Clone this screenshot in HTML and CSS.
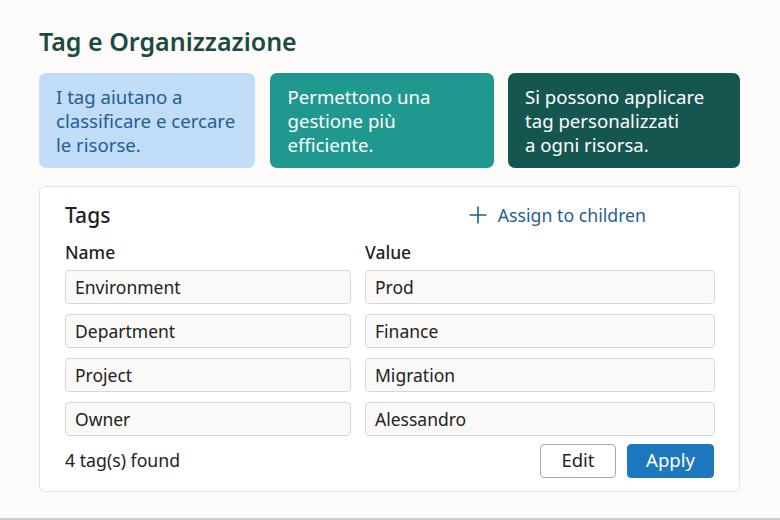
FILE: index.html
```html
<!DOCTYPE html>
<html lang="it">
<head>
<meta charset="utf-8">
<title>Tag e Organizzazione</title>
<link rel="stylesheet" href="styles.css">
</head>
<body>
<div class="page">
  <h1 class="title">Tag e Organizzazione</h1>
  <div class="cards">
    <div class="card card-light">I tag aiutano a<br>classificare e cercare<br>le risorse.</div>
    <div class="card card-teal">Permettono una<br>gestione più<br>efficiente.</div>
    <div class="card card-dark">Si possono applicare<br>tag personalizzati<br>a ogni risorsa.</div>
  </div>
  <section class="panel">
    <div class="panel-head">
      <h2 class="panel-title">Tags</h2>
      <a class="assign" href="#">
        <svg class="plus" width="20" height="20" viewBox="0 0 20 20" aria-hidden="true"><path d="M10 1.5v17M1.5 10h17" stroke="#1f5f8e" stroke-width="1.6" fill="none"/></svg>
        Assign to children
      </a>
    </div>
    <div class="grid">
      <div class="col-label">Name</div>
      <div class="col-label">Value</div>
      <div class="field">Environment</div>
      <div class="field">Prod</div>
      <div class="field">Department</div>
      <div class="field">Finance</div>
      <div class="field">Project</div>
      <div class="field">Migration</div>
      <div class="field">Owner</div>
      <div class="field">Alessandro</div>
    </div>
    <div class="panel-foot">
      <span class="count">4 tag(s) found</span>
      <div class="actions">
        <button class="btn btn-edit">Edit</button>
        <button class="btn btn-apply">Apply</button>
      </div>
    </div>
  </section>
</div>
</body>
</html>
```
FILE: styles.css
```css
* { box-sizing: border-box; }
html, body { margin: 0; padding: 0; }
body {
  background: #fcfbf9;
  font-family: "Noto Sans", "Open Sans", sans-serif;
  color: #222;
}
.page {
  width: 780px;
  height: 520px;
  padding: 25px 40px 0 39px;
  border-bottom: 2px solid #cdcdcd;
}
.title {
  margin: 0;
  font-size: 25px;
  line-height: 32px;
  font-weight: 600;
  color: #1d4a44;
}
.cards {
  display: grid;
  grid-template-columns: 216px 224px 1fr;
  column-gap: 14.5px;
  margin-top: 16px;
  height: 95px;
}
.card {
  border-radius: 7px;
  padding: 12px 6px 0 17px;
  font-size: 18.6px;
  line-height: 24px;
}
.card-light { background: #c0dcf6; color: #1f5f8f; }
.card-teal { background: #1f998f; color: #fff; padding-left: 18px; }
.card-dark { background: #165651; color: #fff; }
.panel {
  margin-top: 18px;
  background: #fff;
  border: 1px solid #e2e2e2;
  border-radius: 6px;
  padding: 14px 25px 13px 25px;
  height: 306px;
}
.panel-head {
  display: flex;
  align-items: center;
  justify-content: space-between;
  height: 28px;
}
.panel-title {
  margin: 0;
  font-size: 21px;
  font-weight: 500;
  line-height: 28px;
  color: #1f1f1f;
}
.assign {
  display: flex;
  align-items: center;
  gap: 10px;
  margin-right: 68px;
  color: #1f5f8e;
  text-decoration: none;
  font-size: 17.7px;
  line-height: 24px;
}
.grid {
  display: grid;
  grid-template-columns: 286px 350px;
  column-gap: 14px;
  row-gap: 10px;
  margin-top: 11px;
}
.col-label {
  font-size: 17.5px;
  font-weight: 500;
  line-height: 24px;
  color: #1f1f1f;
  margin-bottom: -4px;
}
.field {
  height: 34px;
  background: #faf9f8;
  border: 1px solid #d8d8d8;
  border-radius: 4px;
  padding: 0 9px;
  display: flex;
  align-items: center;
  font-size: 17.5px;
  color: #222;
}
.panel-foot {
  display: flex;
  align-items: center;
  justify-content: space-between;
  margin-top: 8px;
}
.count { font-size: 17.7px; line-height: 24px; color: #222; margin-top: -2px; }
.actions { display: flex; gap: 11px; }
.btn {
  height: 34px;
  border-radius: 4px;
  font-family: inherit;
  font-size: 18.5px;
  line-height: 24px;
  padding: 0 0 2px;
}
.btn-edit {
  width: 76px;
  background: #fff;
  border: 1px solid #a9a9a9;
  color: #1f1f1f;
}
.btn-apply {
  width: 87px;
  background: #1c77bd;
  border: 1px solid #1c77bd;
  color: #fff;
}
```
